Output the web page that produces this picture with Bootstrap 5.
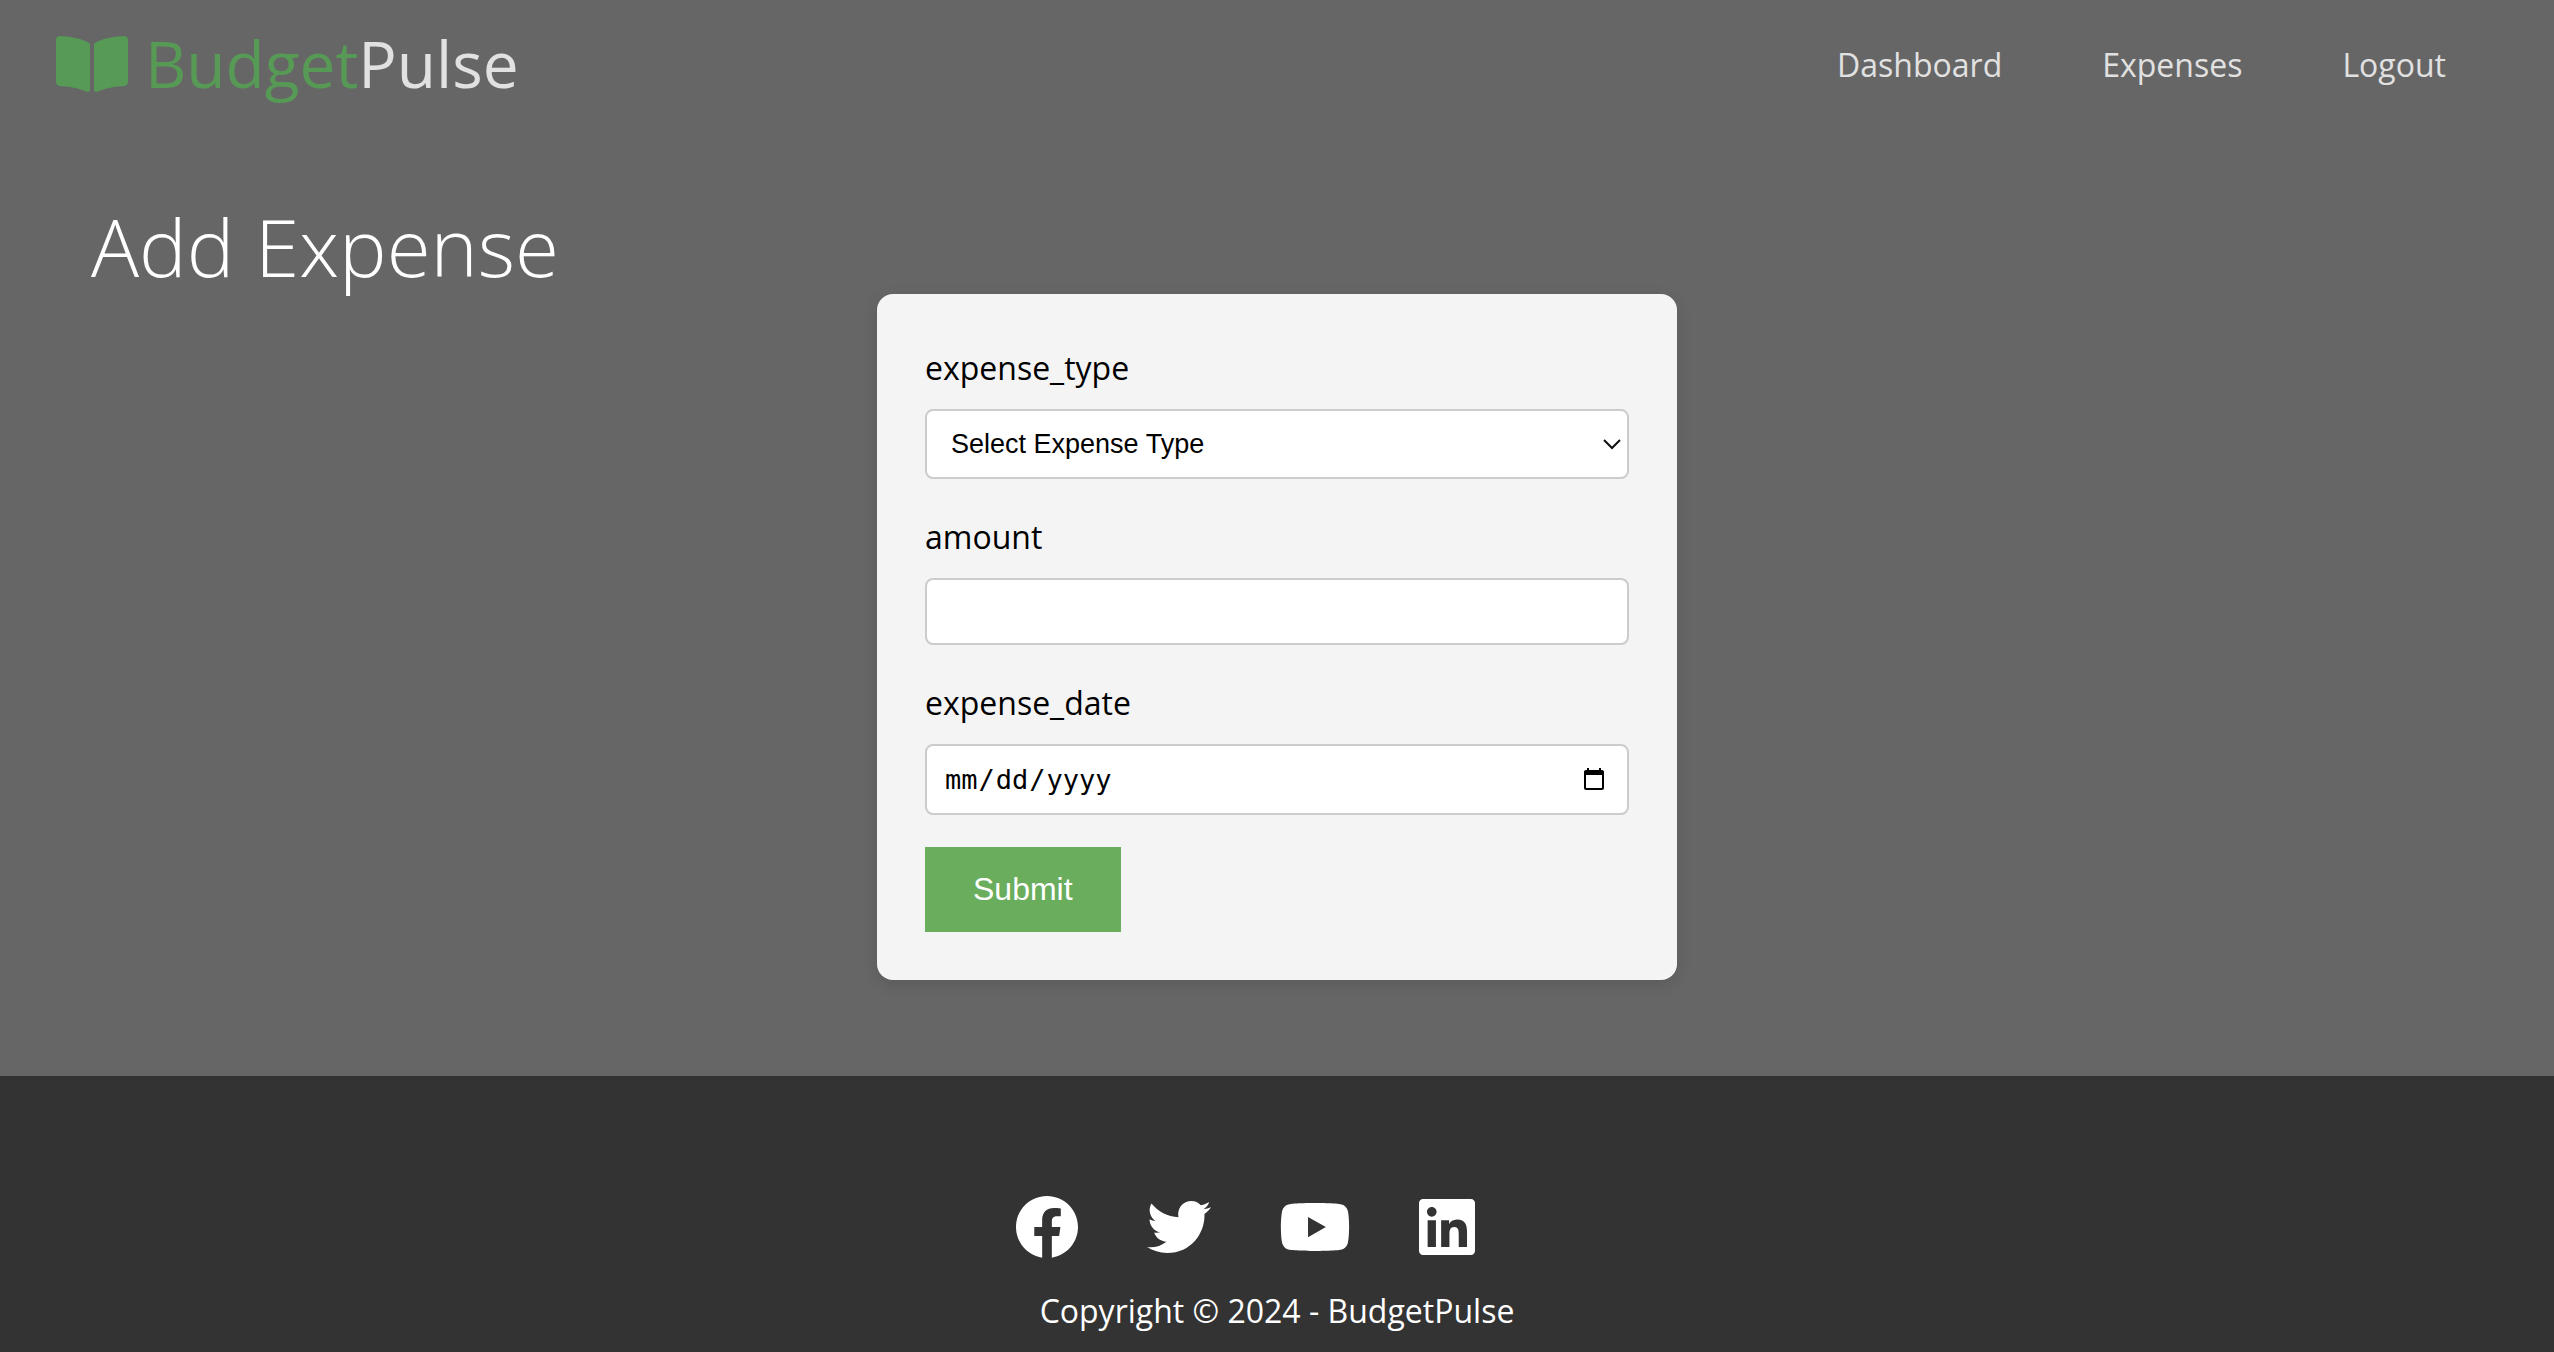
<!DOCTYPE html>
<html lang="en">
<head>
<meta charset="utf-8">
<meta name="viewport" content="width=device-width, initial-scale=1">
<title>BudgetPulse - Add Expense</title>
<link href="https://cdn.jsdelivr.net/npm/bootstrap@5.3.0/dist/css/bootstrap.min.css" rel="stylesheet">
<style>
  body { font-family: "Open Sans", sans-serif; font-size: 32px; line-height: 51px; color: #fff; background: #666; }
  .site-nav { padding: 20px 56px; }
  .brand-link { font-size: 64px; line-height: 88px; gap: 17px; color: #e1e1e1; padding: 0; margin: 0; }
  .brand-link:hover { color: #e1e1e1; }
  .brand-green { color: #569a55; }
  .brand-icon { width: 72px; height: 64px; fill: #569a55; }
  .site-links { gap: 100px; padding-right: 52px; }
  .site-links .nav-link { color: #e1e1e1; padding: 0; }
  .page-title { font-size: 80px; font-weight: 300; line-height: 96px; margin: 70px 91px 0; }
  .expense-card { max-width: 800px; padding: 48px; border-radius: 16px; background: #f4f4f4; color: #000; box-shadow: 0 4px 16px rgba(0, 0, 0, .12); }
  .expense-card .form-label { margin-bottom: 16px; display: block; }
  .field { margin-bottom: 32px; }
  .field .form-control, .field .form-select { border: 2px solid #ccc; border-radius: 8px; background-color: #fff; color: #000; font: 27px/31px "Liberation Sans", sans-serif; padding: 16px 18px; }
  .field .form-select { height: 70px; padding: 0 24px; background-image: url("data:image/svg+xml,%3Csvg xmlns='http://www.w3.org/2000/svg' viewBox='0 0 18 12'%3E%3Cpath d='M1 2l8 8 8-8' fill='none' stroke='%23111' stroke-width='2'/%3E%3C/svg%3E"); background-size: 18px 12px; background-position: right 6px center; }
  .field .date-box { height: 71px; font-family: "DejaVu Sans Mono", monospace; }
  .date-box::-webkit-datetime-edit-text { padding: 0 1px; }
  .date-box::-webkit-calendar-picker-indicator { width: 26px; height: 26px; padding: 0; margin-right: 2px; }
  .btn-submit { border: 0; border-radius: 0; background: #69ad5d; color: #fff; font: 32px/37px "Liberation Sans", sans-serif; padding: 24px 48px; }
  .btn-submit:hover { background: #569a55; color: #fff; }
  .site-footer { background: #333; margin-top: 96px; padding: 119px 0 14px; }
  .social { gap: 68px; padding-right: 64px; }
  .social a { display: block; }
  .social svg { display: block; height: 64px; fill: #fff; }
  .copyright { margin: 26px 0 0; }
</style>
<script src="https://cdn.jsdelivr.net/npm/bootstrap@5.3.0/dist/js/bootstrap.bundle.min.js"></script>
</head>
<body class="d-flex flex-column min-vh-100">
<nav class="site-nav d-flex flex-wrap align-items-center justify-content-between">
  <a class="brand-link navbar-brand d-flex align-items-center" href="#">
    <svg class="brand-icon" viewBox="0 0 576 512" aria-hidden="true"><path d="M542.22 32.05c-54.8 3.11-163.72 14.43-230.96 55.59-4.64 2.84-7.27 7.89-7.27 13.17v363.87c0 11.55 12.63 18.85 23.28 13.49 69.18-34.82 169.23-44.32 218.7-46.92 16.89-.89 30.02-14.43 30.02-30.66V62.75c.01-17.71-15.35-31.74-33.77-30.7zM264.73 87.64C197.5 46.48 88.58 35.17 33.78 32.05 15.36 31.01 0 45.04 0 62.75V400.6c0 16.24 13.13 29.78 30.02 30.66 49.49 2.6 149.59 12.11 218.77 46.95 10.62 5.35 23.21-1.94 23.21-13.46V100.63c0-5.29-2.62-10.14-7.27-12.99z"/></svg>
    <span><span class="brand-green">Budget</span>Pulse</span>
  </a>
  <ul class="site-links nav">
    <li class="nav-item"><a class="nav-link" href="#">Dashboard</a></li>
    <li class="nav-item"><a class="nav-link" href="#">Expenses</a></li>
    <li class="nav-item"><a class="nav-link" href="#">Logout</a></li>
  </ul>
</nav>
<main>
  <h1 class="page-title">Add Expense</h1>
  <form class="expense-card w-100 mx-auto">
    <div class="field">
      <label class="form-label" for="expense_type">expense_type</label>
      <select class="form-select" id="expense_type"><option>Select Expense Type</option></select>
    </div>
    <div class="field">
      <label class="form-label" for="amount">amount</label>
      <input class="form-control" type="text" inputmode="decimal" id="amount">
    </div>
    <div class="field">
      <label class="form-label" for="expense_date">expense_date</label>
      <input class="form-control date-box" type="date" id="expense_date">
    </div>
    <button class="btn btn-submit d-block" type="submit">Submit</button>
  </form>
</main>
<footer class="site-footer flex-grow-1 text-center">
  <div class="social d-flex justify-content-center">
    <a href="#" aria-label="Facebook"><svg viewBox="0 0 512 512"><path d="M504 256C504 119 393 8 256 8S8 119 8 256c0 123.78 90.69 226.38 209.25 245V327.69h-63V256h63v-54.64c0-62.15 37-96.48 93.67-96.48 27.14 0 55.52 4.84 55.52 4.84v61h-31.28c-30.8 0-40.41 19.12-40.41 38.73V256h68.78l-11 71.69h-57.78V501C413.31 482.38 504 379.78 504 256z"/></svg></a>
    <a href="#" aria-label="Twitter"><svg viewBox="0 0 512 512"><path d="M459.37 151.716c.325 4.548.325 9.097.325 13.645 0 138.72-105.583 298.558-298.558 298.558-59.452 0-114.68-17.219-161.137-47.106 8.447.974 16.568 1.299 25.34 1.299 49.055 0 94.213-16.568 130.274-44.832-46.132-.975-84.792-31.188-98.112-72.772 6.498.974 12.995 1.624 19.818 1.624 9.421 0 18.843-1.3 27.614-3.573-48.081-9.747-84.143-51.98-84.143-102.985v-1.299c13.969 7.797 30.214 12.67 47.431 13.319-28.264-18.843-46.781-51.005-46.781-87.391 0-19.492 5.197-37.36 14.294-52.954 51.655 63.675 129.3 105.258 216.365 109.807-1.624-7.797-2.599-15.918-2.599-24.04 0-57.828 46.782-104.934 104.934-104.934 30.213 0 57.502 12.67 76.67 33.137 23.715-4.548 46.456-13.32 66.599-25.34-7.798 24.366-24.366 44.833-46.132 57.827 21.117-2.273 41.584-8.122 60.426-16.243-14.292 20.791-32.161 39.308-52.628 54.253z"/></svg></a>
    <a href="#" aria-label="YouTube"><svg viewBox="0 0 576 512"><path d="M549.655 124.083c-6.281-23.65-24.787-42.276-48.284-48.597C458.781 64 288 64 288 64S117.22 64 74.629 75.486c-23.497 6.322-42.003 24.947-48.284 48.597-11.412 42.867-11.412 132.305-11.412 132.305s0 89.438 11.412 132.305c6.281 23.65 24.787 41.5 48.284 47.821C117.22 448 288 448 288 448s170.78 0 213.371-11.486c23.497-6.321 42.003-24.171 48.284-47.821 11.412-42.867 11.412-132.305 11.412-132.305s0-89.438-11.412-132.305zm-317.51 213.508V175.185l142.739 81.205-142.739 81.201z"/></svg></a>
    <a href="#" aria-label="LinkedIn"><svg viewBox="0 0 448 512"><path d="M416 32H31.9C14.3 32 0 46.5 0 64.3v383.4C0 465.5 14.3 480 31.9 480H416c17.6 0 32-14.5 32-32.3V64.3c0-17.8-14.4-32.3-32-32.3zM135.4 416H69V202.2h66.5V416zm-33.2-243c-21.3 0-38.5-17.3-38.5-38.5S80.9 96 102.2 96c21.2 0 38.5 17.3 38.5 38.5 0 21.3-17.2 38.5-38.5 38.5zm282.1 243h-66.4V312c0-24.8-.5-56.7-34.5-56.7-34.6 0-39.9 27-39.9 54.9V416h-66.4V202.2h63.7v29.2h.9c8.9-16.8 30.6-34.5 62.9-34.5 67.2 0 79.7 44.3 79.7 101.9V416z"/></svg></a>
  </div>
  <p class="copyright">Copyright © 2024 - BudgetPulse</p>
</footer>
</body>
</html>
